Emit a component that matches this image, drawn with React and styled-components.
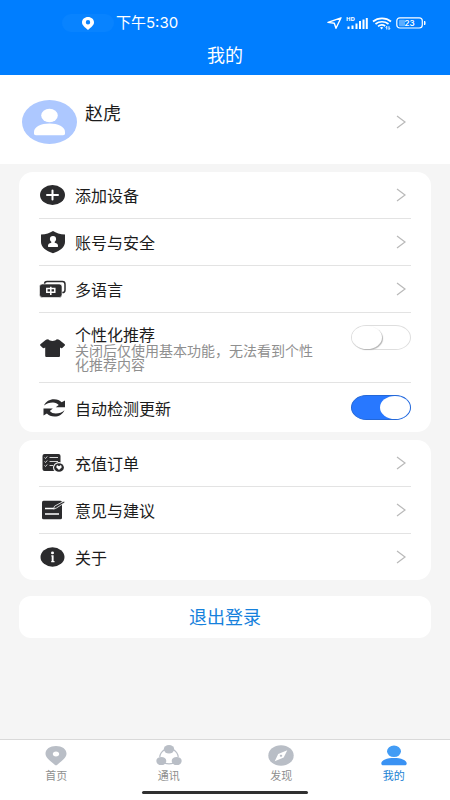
import React, { useState } from 'react';
import styled, { createGlobalStyle } from 'styled-components';

const GlobalStyle = createGlobalStyle`
  *, *::before, *::after { box-sizing: border-box; }
  body {
    margin: 0;
    background: #f5f5f5;
    color: #1c1c1c;
    font-family: "Noto Sans CJK SC", "Noto Sans", sans-serif;
  }
  button { font-family: inherit; }
`;

const Page = styled.div`
  display: flex;
  flex-direction: column;
  min-height: 100vh;
`;

const Header = styled.header`
  background: #007eff;
  color: #fff;
  padding: 12px 24px 9px;
`;

const StatusBar = styled.div`
  display: flex;
  align-items: center;
  justify-content: space-between;
  height: 22px;
  padding-left: 38px;
`;

const StatusGroup = styled.div`
  display: flex;
  align-items: center;
  gap: ${(p) => p.$gap}px;
`;

const LocationPill = styled.span`
  display: flex;
  align-items: center;
  justify-content: center;
  width: 52px;
  height: 18px;
  border-radius: 9px;
  background: #0883ff;
`;

const Clock = styled.time`
  font-family: Inter, "Noto Sans CJK SC", sans-serif;
  font-size: 15px;
  line-height: 20px;
`;

const Title = styled.h1`
  margin: 9px 0 0;
  font-size: 18px;
  line-height: 23px;
  font-weight: 400;
  text-align: center;
`;

const Content = styled.main`
  flex: 1;
`;

const Profile = styled.a`
  display: flex;
  align-items: center;
  gap: 8px;
  min-height: 89px;
  padding: 5px 44px 0 22px;
  background: #fff;
  color: inherit;
  text-decoration: none;
`;

const ProfileName = styled.span`
  flex: 1;
  align-self: flex-start;
  padding-top: 19px;
  font-size: 18px;
  line-height: 26px;
`;

const Cards = styled.div`
  display: flex;
  flex-direction: column;
  gap: 8px;
  padding: 8px 19px 0;
`;

const Card = styled.ul`
  list-style: none;
  margin: 0;
  padding: 0 20px;
  border-radius: 14px;
  background: #fff;
`;

const Item = styled.li`
  border-bottom: 1px solid #e3e3e3;
  &:last-child { border-bottom: 0; }
`;

const rowLayout = `
  display: flex;
  align-items: center;
  gap: 9px;
  width: 100%;
  color: inherit;
  font-size: 16px;
  line-height: 18px;
`;

const RowLink = styled.a`
  ${rowLayout}
  min-height: 46px;
  padding-right: 5px;
  text-decoration: none;
`;

const SwitchRow = styled.div`
  ${rowLayout}
  min-height: 49px;
  padding: 12px 0 11px;
`;

const RowLabel = styled.span`
  flex: 1;
  padding-bottom: 1px;
`;

const SwitchLabel = styled.label`
  flex: 1;
  padding-right: 20px;
`;

const Hint = styled.small`
  display: block;
  color: #8f8f8f;
  font-size: 14px;
  line-height: 14px;
`;

const Switch = styled.input.attrs({ type: 'checkbox', role: 'switch' })`
  appearance: none;
  flex: none;
  align-self: flex-start;
  display: flex;
  justify-content: flex-start;
  width: 60px;
  height: 25px;
  margin: 0;
  border: 1px solid #dedede;
  border-radius: 16px / 13px;
  background: #fff;
  cursor: pointer;

  &::before {
    content: '';
    width: 30px;
    height: 23px;
    border-radius: 50%;
    background: #fff;
    box-shadow: 1px 1px 1px #b5b5b5;
  }

  &:checked {
    justify-content: flex-end;
    border-color: #2468d8;
    background: #2878ff;
  }

  &:checked::before { box-shadow: none; }
`;

const LogoutButton = styled.button`
  width: 100%;
  height: 42px;
  margin-top: 8px;
  padding: 0 0 2px;
  border: 0;
  border-radius: 12px;
  background: #fff;
  color: #1681dc;
  font-size: 18px;
  line-height: 24px;
  cursor: pointer;
`;

const BottomBar = styled.footer`
  padding-bottom: 6px;
  border-top: 1px solid #d9d9d9;
  background: #fff;
`;

const Tabs = styled.nav`
  display: grid;
  grid-template-columns: repeat(4, 1fr);
`;

const Tab = styled.a`
  display: flex;
  flex-direction: column;
  align-items: center;
  gap: 2px;
  padding-top: 5px;
  color: ${(p) => (p.$active ? '#1a7fd4' : '#8e8e8e')};
  font-size: 11px;
  line-height: 14px;
  text-decoration: none;
`;

const HomeIndicator = styled.div`
  width: 37%;
  height: 3px;
  margin: 9px auto 0;
  border-radius: 2px;
  background: #303030;
`;

const Svg = styled.svg`
  display: block;
  flex: none;
`;

const HdText = styled.text`
  font: 700 6px "Noto Sans", sans-serif;
`;

const BatteryText = styled.text`
  font: 600 8px Inter, sans-serif;
`;

const INK = '#2b2b2d';

const RowIcon = ({ children }) => (
  <Svg width="27" height="24" viewBox="0 0 27 24" aria-hidden="true">{children}</Svg>
);

const AddIcon = () => (
  <RowIcon>
    <ellipse cx="13.5" cy="12" rx="12.5" ry="10" fill={INK} />
    <path d="M8 12h11M13.5 7.5v9" stroke="#fff" strokeWidth="2" strokeLinecap="round" />
  </RowIcon>
);

const ShieldIcon = () => (
  <RowIcon>
    <path d="M14 1C17 3 21 4.2 26 4.6V12c0 5-5 9-12 11.2C7 21 2 17 2 12V4.6C7 4.2 11 3 14 1Z" fill={INK} />
    <ellipse cx="14" cy="9" rx="3.1" ry="3" fill="#fff" />
    <path d="M12.3 10.5h3.4v2.2c2.2.6 3.3 1.4 3.3 3v.5c0 .6-.4.9-1 .9h-8c-.6 0-1-.3-1-.9v-.5c0-1.6 1.1-2.4 3.3-3Z" fill="#fff" />
  </RowIcon>
);

const LanguageIcon = () => (
  <RowIcon>
    <rect x="5.5" y="4.6" width="20.5" height="11" rx="2.6" fill="#fff" stroke={INK} strokeWidth="1.5" />
    <rect x="0.5" y="7" width="22.5" height="13.5" rx="2.8" fill={INK} stroke="#fff" strokeWidth=".6" />
    <path d="M7.8 11.6h8v3.7h-8zM11.8 9.7v8.3" fill="none" stroke="#fff" strokeWidth="1.5" />
  </RowIcon>
);

const ShirtIcon = () => (
  <RowIcon>
    <path d="M9.2 3.3c1.8 2.2 6.8 2.2 8.6 0 1.2 0 2.2.3 3 .9l4.9 4c.5.5.5.9.1 1.4l-2.2 2.2c-.5.5-1.1.6-1.7.3l-.9-.5v8.2c0 .9-.5 1.3-1.4 1.3H7.6c-.9 0-1.4-.4-1.4-1.3v-8.2l-.9.5c-.6.3-1.2.2-1.7-.3L1.3 9.600c-.4-.5-.4-.9.1-1.400l4.900-4c.8-.6 1.800-.9 2.900-.9Z" fill={INK} />
  </RowIcon>
);

const RefreshIcon = () => (
  <RowIcon>
    <path d="M5 9.5C7 5.5 10.5 3.3 15 3.3c3.4 0 5.8 1.1 7.6 2.9L26 4.4v6.8h-9.300l3-2.200c-1.500-1.700-3.400-2.600-6-2.500-3.400 0-6.200 1-8.700 3Z" fill={INK} />
    <path d="M25.5 14.2c-2 4.1-5.5 6.3-10 6.3-3.4 0-5.8-1.1-7.6-2.9l-3.4 1.9v-6.900h9.300l-3 2.300c1.500 1.700 3.400 2.500 6 2.500 3.400 0 6.200-1.100 8.700-3.200Z" fill={INK} />
  </RowIcon>
);

const OrdersIcon = () => (
  <RowIcon>
    <rect x="3.5" y="3" width="18" height="17" rx="2" fill={INK} />
    <path d="M5.5 6.5l1 1 1.700-2M5.500 10.500l1 1 1.700-2M5.500 14.500l1 1 1.700-2M10.500 6.500h8.500M10.500 10.500h8.500M10.500 14.500h3.500" fill="none" stroke="#d8d8d8" strokeWidth="1" />
    <ellipse cx="20" cy="16.5" rx="6" ry="5.4" fill="#fff" />
    <ellipse cx="20" cy="16.5" rx="4.9" ry="4.3" fill={INK} />
    <path d="M18 14l2 1.200L22 14l.8 2.200L20 19l-2.800-2.800Z" fill="#fff" />
  </RowIcon>
);

const FeedbackIcon = () => (
  <RowIcon>
    <rect x="3" y="2.8" width="20" height="18.5" rx="1.5" fill={INK} />
    <path d="M6 16h14M6 10.500h9.500" stroke="#fff" strokeWidth="1.500" />
    <path d="M14.500 11l1-2.800L25 3.100l1 1.300-8.700 5.700Z" fill={INK} stroke="#fff" strokeWidth=".8" />
  </RowIcon>
);

const InfoIcon = () => (
  <RowIcon>
    <ellipse cx="13.5" cy="12" rx="12" ry="9.7" fill={INK} />
    <ellipse cx="13.5" cy="7.9" rx="1.5" ry="1.3" fill="#fff" />
    <path d="M12.3 10.300h2.300v5.800h.9v1.200h-3.300v-1.200h.5v-4.700h-.4z" fill="#fff" />
  </RowIcon>
);

const Chevron = () => (
  <Svg width="10" height="14" viewBox="0 0 10 14" fill="none" aria-hidden="true">
    <path d="M1 1l8 6-8 6" stroke="#b9b9b9" strokeWidth="1.2" />
  </Svg>
);

const Avatar = () => (
  <Svg width="55" height="44" viewBox="0 0 55 44" aria-hidden="true">
    <ellipse cx="27.5" cy="22" rx="27.5" ry="22" fill="#adc8ff" />
    <ellipse cx="27.5" cy="15.5" rx="8.3" ry="6.7" fill="#fff" />
    <path d="M12 32c0-5.300 7-8.500 15.500-8.500S43 26.700 43 32v1.500c0 1-.7 1.700-2 1.700H14c-1.300 0-2-.7-2-1.700Z" fill="#fff" />
  </Svg>
);

const StatusPin = () => (
  <Svg width="12" height="13" viewBox="0 0 12 13" aria-hidden="true">
    <path fillRule="evenodd" d="M6 0c3.400 0 6 2.300 6 5.300C12 8.500 9 10.200 6 13 3 10.200 0 8.500 0 5.300 0 2.300 2.600 0 6 0Zm0 3a2.200 2.200 0 1 0 0 4.400A2.200 2.200 0 0 0 6 3Z" fill="#fff" />
  </Svg>
);

const NavigationIcon = () => (
  <Svg width="15" height="12" viewBox="0 0 15 12" fill="none" aria-hidden="true">
    <path d="M1 5.400L14 .8 9 11.300 7.300 6.300Z" stroke="#fff" strokeWidth="1.400" strokeLinejoin="round" />
  </Svg>
);

const SignalIcon = () => (
  <Svg width="22" height="14" viewBox="0 0 22 14" fill="#fff" aria-hidden="true">
    <HdText x="0" y="5">HD</HdText>
    <path d="M1.500 10.500h2V13h-2zM5.500 9.500h2V13h-2zM9.500 7.500h2V13h-2zM13 5h2v8h-2zM16.500 3.500h2V13h-2zM19.800 2h2v11h-2z" />
  </Svg>
);

const WifiIcon = () => (
  <Svg width="20" height="13" viewBox="0 0 20 13" fill="none" stroke="#fff" aria-hidden="true">
    <path d="M1 4.500c5-4.300 13-4.300 18 0M3.500 7c3.700-3 9.300-3 13 0M6 9.300c2.300-1.800 5-1.800 7.200-.3" strokeWidth="1.700" />
    <path d="M8 10.500c1-.8 2.200-.8 3.200 0L9.600 12.500Z" fill="#fff" stroke="none" />
    <path d="M14.800 12.500V9.300l-1 1.200M17 9.300v3.200l1-1.200" strokeWidth="1" />
  </Svg>
);

const BatteryIcon = () => (
  <Svg width="30" height="12" viewBox="0 0 30 12" aria-label="23%">
    <rect x=".8" y=".8" width="25.5" height="10.2" rx="3" fill="none" stroke="#fff" strokeWidth="1.2" />
    <rect x="3" y="2.8" width="6" height="6.4" rx="1" fill="#5cadff" />
    <path d="M28 4h.5c.5 0 1 .5 1 1v2c0 .5-.5 1-1 1H28Z" fill="#fff" />
    <BatteryText x="13.5" y="8.8" textAnchor="middle" fill="#fff">23</BatteryText>
  </Svg>
);

const TabIcon = ({ children }) => (
  <Svg width="26" height="21" viewBox="0 0 26 21" aria-hidden="true">{children}</Svg>
);

const HomeTabIcon = () => (
  <TabIcon>
    <path fillRule="evenodd" d="M13 1C19 1 23.500 4 23.500 8.500c0 4.300-4.300 7-9.200 11.300-.8.700-1.800.7-2.600 0C6.800 15.500 2.500 12.800 2.500 8.500 2.500 4 7 1 13 1Zm0 5.500c-1.900 0-3.200 1.100-3.200 2.500s1.300 2.500 3.200 2.500 3.200-1.100 3.200-2.500S14.900 6.500 13 6.500Z" fill="#b9bec6" />
  </TabIcon>
);

const ContactsTabIcon = () => (
  <TabIcon>
    <path d="M9 4.500C5.800 6.300 4 8.700 3.800 12M17 4.500c3.200 1.800 5 4.200 5.200 7.500M8.500 18.200c3 .8 6 .8 9 0" fill="none" stroke="#b9bec6" strokeWidth="1.200" />
    <g fill="#b9bec6">
      <ellipse cx="13" cy="4.3" rx="5.2" ry="4.2" />
      <ellipse cx="5.3" cy="16" rx="5" ry="4.1" />
      <ellipse cx="20.7" cy="16" rx="5" ry="4.1" />
    </g>
  </TabIcon>
);

const DiscoverTabIcon = () => (
  <TabIcon>
    <ellipse cx="13" cy="10.5" rx="12.7" ry="10.2" fill="#b9bec6" />
    <path fillRule="evenodd" d="M19.300 5.300l-3.600 7.300-9 3.600 3.500-7.300ZM13 9.700c-.7 0-1.200.4-1.200 1s.5 1 1.200 1 1.200-.4 1.200-1-.5-1-1.200-1Z" fill="#fff" />
  </TabIcon>
);

const MineTabIcon = () => (
  <TabIcon>
    <ellipse cx="13" cy="6.3" rx="7" ry="5.8" fill="#429cf5" />
    <path d="M.3 18.500c0-3.500 5.700-5.500 12.700-5.500s12.700 2 12.700 5.500c0 1.200-.6 1.800-2 1.800H2.300c-1.400 0-2-.6-2-1.800Z" fill="#3a92f3" />
  </TabIcon>
);

const LinkRow = ({ icon: Icon, label }) => (
  <Item>
    <RowLink href="#">
      <Icon />
      <RowLabel>{label}</RowLabel>
      <Chevron />
    </RowLink>
  </Item>
);

const ToggleRow = ({ id, icon: Icon, label, hint, initial }) => {
  const [on, setOn] = useState(initial);
  return (
    <Item>
      <SwitchRow>
        <Icon />
        <SwitchLabel htmlFor={id}>
          {label}
          {hint && <Hint>{hint}</Hint>}
        </SwitchLabel>
        <Switch id={id} checked={on} onChange={(e) => setOn(e.target.checked)} />
      </SwitchRow>
    </Item>
  );
};

const tabs = [
  { label: '首页', icon: HomeTabIcon },
  { label: '通讯', icon: ContactsTabIcon },
  { label: '发现', icon: DiscoverTabIcon },
  { label: '我的', icon: MineTabIcon, active: true },
];

export default function App() {
  return (
    <Page>
      <GlobalStyle />
      <Header>
        <StatusBar>
          <StatusGroup $gap={2}>
            <LocationPill><StatusPin /></LocationPill>
            <Clock>下午5:30</Clock>
          </StatusGroup>
          <StatusGroup $gap={4}>
            <NavigationIcon />
            <SignalIcon />
            <WifiIcon />
            <BatteryIcon />
          </StatusGroup>
        </StatusBar>
        <Title>我的</Title>
      </Header>

      <Content>
        <Profile href="#">
          <Avatar />
          <ProfileName>赵虎</ProfileName>
          <Chevron />
        </Profile>

        <Cards>
          <Card>
            <LinkRow icon={AddIcon} label="添加设备" />
            <LinkRow icon={ShieldIcon} label="账号与安全" />
            <LinkRow icon={LanguageIcon} label="多语言" />
            <ToggleRow
              id="personalized"
              icon={ShirtIcon}
              label="个性化推荐"
              hint="关闭后仅使用基本功能，无法看到个性化推荐内容"
              initial={false}
            />
            <ToggleRow id="auto-update" icon={RefreshIcon} label="自动检测更新" initial />
          </Card>
          <Card>
            <LinkRow icon={OrdersIcon} label="充值订单" />
            <LinkRow icon={FeedbackIcon} label="意见与建议" />
            <LinkRow icon={InfoIcon} label="关于" />
          </Card>
          <LogoutButton type="button">退出登录</LogoutButton>
        </Cards>
      </Content>

      <BottomBar>
        <Tabs>
          {tabs.map(({ label, icon: Icon, active }) => (
            <Tab key={label} href="#" $active={active} aria-current={active ? 'page' : undefined}>
              <Icon />
              {label}
            </Tab>
          ))}
        </Tabs>
        <HomeIndicator />
      </BottomBar>
    </Page>
  );
}
